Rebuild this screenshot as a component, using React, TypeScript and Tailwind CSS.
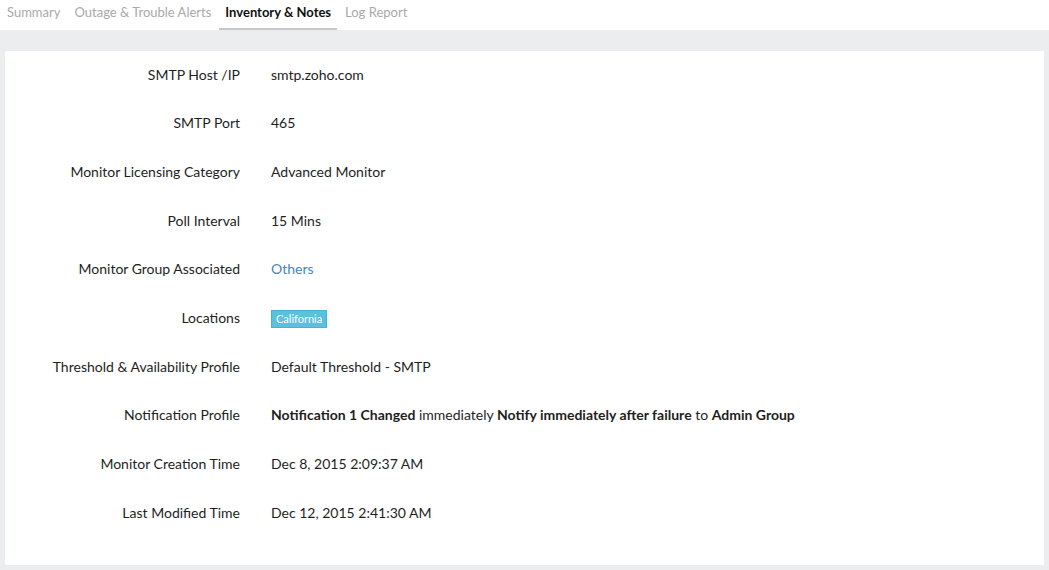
import React from "react";

interface Row {
    label: string;
    value: React.ReactNode;
}

const tabs = ["Summary", "Outage & Trouble Alerts", "Inventory & Notes", "Log Report"];

const rows: Row[] = [
    { label: "SMTP Host /IP", value: "smtp.zoho.com" },
    { label: "SMTP Port", value: "465" },
    { label: "Monitor Licensing Category", value: "Advanced Monitor" },
    { label: "Poll Interval", value: "15 Mins" },
    { label: "Monitor Group Associated", value: <span className="text-[#3f86c8]">Others</span> },
    {
        label: "Locations",
        value: (
            <span className="inline-block bg-[#5bc0de] border border-[#46b3d3] text-white text-[11px] leading-[16px] px-[4px]">
                California
            </span>
        ),
    },
    { label: "Threshold & Availability Profile", value: "Default Threshold - SMTP" },
    {
        label: "Notification Profile",
        value: (
            <span>
                <b className="font-bold">Notification 1 Changed</b> immediately{" "}
                <b className="font-bold">Notify immediately after failure</b> to{" "}
                <b className="font-bold">Admin Group</b>
            </span>
        ),
    },
    { label: "Monitor Creation Time", value: "Dec 8, 2015 2:09:37 AM" },
    { label: "Last Modified Time", value: "Dec 12, 2015 2:41:30 AM" },
];

const App: React.FC = () => {
    return (
        <div className="w-[1049px] h-[570px] bg-[#ecedee] font-['Lato',sans-serif] text-[#1e1e1e] overflow-hidden">
            {/* tabs */}
            <div className="h-[30px] bg-white flex items-start text-[13px]">
                {tabs.map((t) => {
                    const active = t === "Inventory & Notes";
                    return (
                        <div
                            key={t}
                            className={
                                active
                                    ? "h-[30px] px-[6px] mx-[1px] border-b-[2px] border-[#c8c8c8] text-[#111] font-bold pt-[3px]"
                                    : "h-[30px] px-[7px] text-[#a9a9a9] pt-[3px]"
                            }
                        >
                            {t}
                        </div>
                    );
                })}
            </div>

            <div className="pt-[21px] px-[5px]">
                <div className="bg-white h-[514px] pb-[28px] text-[14px]">
                    {rows.map((r) => (
                        <div key={r.label} className="flex items-center h-[48.67px] pb-[2px]">
                            <div className="w-[235px] text-right">{r.label}</div>
                            <div className="pl-[31px]">{r.value}</div>
                        </div>
                    ))}
                </div>
            </div>
        </div>
    );
};

export default App;
